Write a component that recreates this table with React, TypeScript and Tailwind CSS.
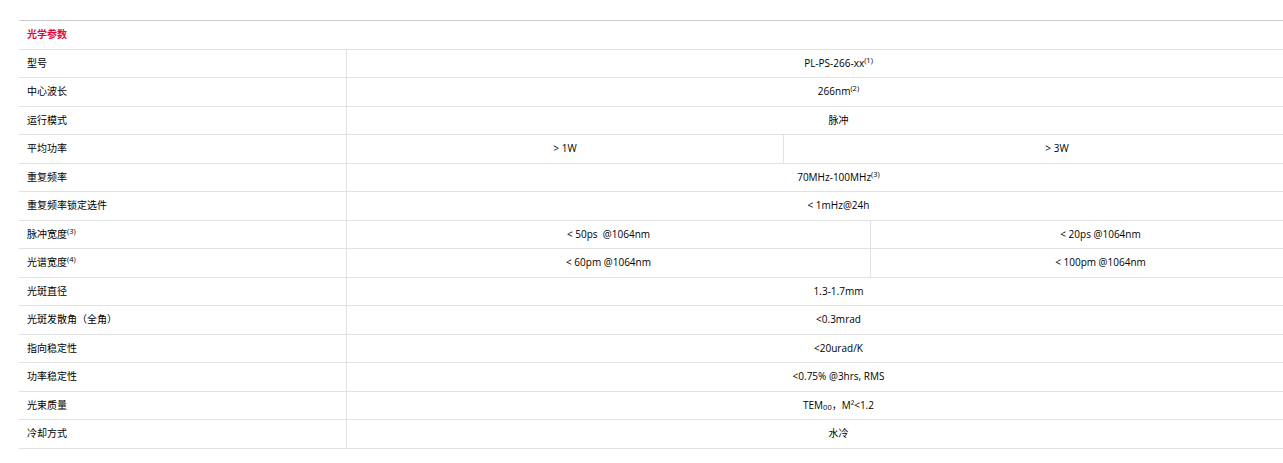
import React from "react";

const font = { fontFamily: '"Open Sans", "Noto Sans CJK SC", sans-serif' };

type Row = { label: React.ReactNode; cells: React.ReactNode[]; split?: number };

const rows: Row[] = [
  { label: "型号", cells: [<>PL-PS-266-xx<sup>(1)</sup></>] },
  { label: "中心波长", cells: [<>266nm<sup>(2)</sup></>] },
  { label: "运行模式", cells: ["脉冲"] },
  { label: "平均功率", cells: ["> 1W", "> 3W"], split: 437 },
  { label: "重复频率", cells: [<>70MHz-100MHz<sup>(3)</sup></>] },
  { label: "重复频率锁定选件", cells: ["< 1mHz@24h"] },
  { label: <>脉冲宽度<sup>(3)</sup></>, cells: ["< 50ps  @1064nm", "< 20ps @1064nm"], split: 524 },
  { label: <>光谱宽度<sup>(4)</sup></>, cells: ["< 60pm @1064nm", "< 100pm @1064nm"], split: 524 },
  { label: "光斑直径", cells: ["1.3-1.7mm"] },
  { label: "光斑发散角（全角）", cells: ["<0.3mrad"] },
  { label: "指向稳定性", cells: ["<20urad/K"] },
  { label: "功率稳定性", cells: ["<0.75% @3hrs, RMS"] },
  { label: "光束质量", cells: [<>TEM<sub>00</sub>，M²&lt;1.2</>] },
  { label: "冷却方式", cells: ["水冷"] },
];

export default function App() {
  return (
    <div className="w-[1283px] h-[463px] overflow-hidden bg-white pt-[20px] pl-[19px]" style={font}>
      <div className="w-[1311px] text-[10px] text-black whitespace-pre">
        <div className="h-[29.5px] border-t border-b border-t-[#cfcfcf] border-b-[#e2e2e2] flex items-center pl-[8px]">
          <span className="text-[#e5053a] font-bold">光学参数</span>
        </div>
        {rows.map((r, i) => (
          <div key={i} className="h-[28.5px] border-b border-[#e2e2e2] flex">
            <div className="w-[328px] shrink-0 border-r border-[#e2e2e2] flex items-center pl-[8px]">
              {r.label}
            </div>
            {r.split ? (
              <>
                <div className="shrink-0 border-r border-[#e2e2e2] flex items-center justify-center" style={{ width: r.split }}>
                  {r.cells[0]}
                </div>
                <div className="flex-1 flex items-center justify-center">{r.cells[1]}</div>
              </>
            ) : (
              <div className="flex-1 flex items-center justify-center">{r.cells[0]}</div>
            )}
          </div>
        ))}
      </div>
    </div>
  );
}
